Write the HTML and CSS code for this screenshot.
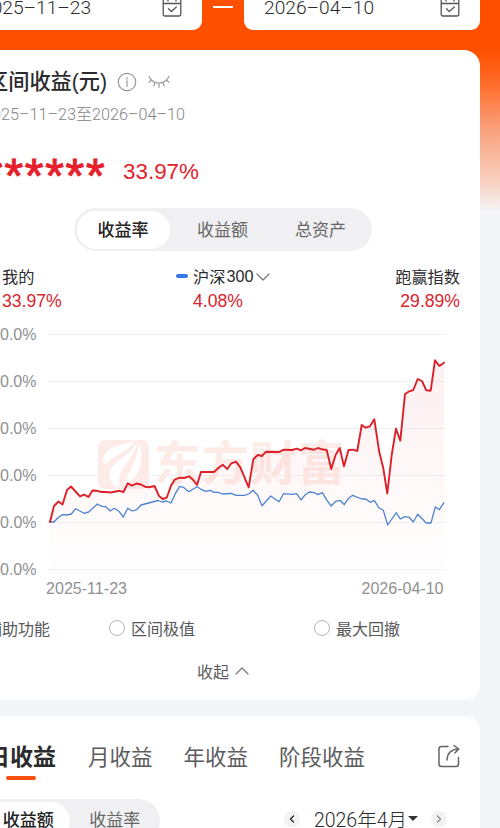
FILE: index.html
```html
<!DOCTYPE html>
<html lang="zh-CN">
<head>
<meta charset="utf-8">
<title>区间收益</title>
<link rel="stylesheet" href="styles.css">
</head>
<body>
<div class="screen">
  <header class="range">
    <div class="range-box range-start"><span>2025–11–23</span>
      <svg class="calendar" viewBox="0 0 20 22"><path d="M1.2 4.2h17.6v15.4q0 1.4-1.4 1.4H2.600q-1.400 0-1.400-1.400zM1.200 8.500h17.600M6 1v5M14 1v5M6.500 13.800l2.800 2.800 5-4.600"/></svg>
    </div>
    <i class="range-dash"></i>
    <div class="range-box range-end"><span>2026–04–10</span>
      <svg class="calendar" viewBox="0 0 20 22"><path d="M1.2 4.2h17.6v15.4q0 1.4-1.4 1.4H2.600q-1.400 0-1.400-1.400zM1.200 8.500h17.600M6 1v5M14 1v5M6.500 13.800l2.800 2.800 5-4.600"/></svg>
    </div>
  </header>

  <section class="card summary">
    <div class="title-row">
      <h1>区间收益(元)</h1>
      <svg class="info" viewBox="0 0 20 20"><circle cx="10" cy="10" r="8.700"/><path d="M10 8.800v5.600M10 5.600v1.500"/></svg>
      <svg class="eye" viewBox="0 0 24 14"><path d="M2 1.500q3.500 6.500 10 6.500t10-6.500M4.600 5L2 7.400M8.200 7.300L6.800 11M12 8v4.200M15.800 7.300l1.400 3.700M19.400 5L22 7.400"/></svg>
    </div>
    <p class="period">2025–11–23至2026–04–10</p>
    <div class="amount-row"><span class="stars">******</span><span class="rate">33.97%</span></div>
    <nav class="segment">
      <span class="segment-item active">收益率</span><span class="segment-item">收益额</span><span class="segment-item">总资产</span>
    </nav>
    <div class="legend">
      <div><div class="legend-name">我的</div><div class="legend-value">33.97%</div></div>
      <div class="legend-index"><div class="legend-name"><i class="blue-mark"></i>沪深<span class="index-number">300</span><svg class="chevron" viewBox="0 0 14 8"><path d="M1 1l6 6 6-6"/></svg></div><div class="legend-value">4.08%</div></div>
      <div class="legend-win"><div class="legend-name">跑赢指数</div><div class="legend-value">29.89%</div></div>
    </div>
    <svg class="chart" viewBox="0 320 480 280">
      <defs><linearGradient id="area" x1="0" y1="360" x2="0" y2="568" gradientUnits="userSpaceOnUse"><stop offset="0" stop-color="#e8303a" stop-opacity=".075"/><stop offset="1" stop-color="#e8303a" stop-opacity=".005"/></linearGradient></defs>
      <path class="grid" d="M48 334.500H445M48 381.500H445M48 428.500H445M48 475.500H445M48 522.500H445M48 569.500H445"/>
      <g class="watermark">
        <rect x="98" y="440" width="51" height="49" rx="7"/>
        <path class="watermark-cut" d="M135 441C126 444 106 446 103 458C102 462 104 465 106 464C112 456 128 452 135 441ZM137 442C133 455 109 462 109 475C111 485 117 489 121 486C112 473 135 459 137 442ZM139 443C144 461 141 476 123 487C127 475 137 461 139 443Z"/>
        <text x="154" y="480" textLength="191">东方财富</text>
      </g>
      <path class="area" d="M50 522L54 506 58.500 501.500 62.500 504.500 67 490 71 486.500 80 496 84 494.700 88.500 497 92.500 490.500 110 492.500 119.500 490.800 123.500 492 127.500 483.500 132 485.700 136.500 483.500 145 486.700 154.500 486 159 496 162.700 499 166.700 497.700 171 485.700 175 479.300 189 476.300 197 485 201 472 214 472 222.700 464.700 227.300 469 236 461.700 240.300 467.300 248.700 487.300 253.300 459.300 257.700 455 262 456 266 451.700 279.300 452 283.700 449.700 326.700 450 331.200 469 335.700 454.700 339.700 448 344 466.300 348.500 450 357.300 451 361.700 425 370 426.300 374.300 419.300 379.300 452.300 383.300 468.300 387.300 493.500 391.700 455 396 428.700 400.300 440.700 405 394 413.300 390 417.700 379 422 381 426.300 390.300 430.700 390.700 435 360.300 439.300 366 444 362.700V569H50Z"/>
      <polyline class="line-index" points="49.500,522 54,522 58,517.700 62.300,514.700 66.700,515 71.300,514 75.700,508.700 84,513.300 88.700,512 97.300,504 101.700,506.300 105.700,506.700 110.300,511 114.300,508.300 119,511.300 123.300,517 127.700,508.300 132.300,511 136.700,509.700 141,505 158,500.500 162.300,502 166.300,501 171,503 175.300,493.700 179.700,486.300 184,487.700 188.700,491.700 197,486.700 201,489.300 205.700,491.300 210,490.300 214.300,492.300 218.300,492.300 222.700,494 231.300,493.300 236,495.300 244.300,495.300 248.700,494 253,490.300 257.700,495.300 262,505.700 270.700,496 279,501.700 283.500,493.700 292,494.300 296.700,493.700 301,500 305.300,494.700 309.300,492 314,492.700 318,494.700 322.300,492.700 327,500.300 331.300,506 335.700,501.300 340,500.300 344.300,504.700 348.500,498.300 352.700,495.300 361.700,499 365.700,499 370.300,502.300 374.300,500.300 379,508 383.300,510.300 387.700,525 396.300,512.700 400.300,519 404.700,516.700 409,517.300 413.300,522 417.700,514.300 426.300,523 431,523 435.300,507 439.300,509.700 444,502.700"/>
      <polyline class="line-mine" points="50,522 54,506 58.500,501.500 62.500,504.500 67,490 71,486.500 75.500,491.500 80,496.300 84,494.700 88.500,497 92.500,490.500 97,490.800 101.500,492 106,492 110.500,492.500 119.500,490.800 123.500,492 127.700,483.300 132,485.700 136.500,483.500 141,484.500 145,486.700 149,487.200 154.500,486 159,496 162.700,499 166.700,497.700 171,485.700 175,479.300 180,477.700 184,478 189,476.300 193,479.700 197,485 201,472 214,472 218.300,468 222.700,464.700 227.300,469 231.300,463.300 236,461.700 240.300,467.300 248.700,487.300 253.300,459.300 257.700,455 262,456 266,451.700 279.300,452 283.700,449.700 292,450 296.700,448.700 301,450.300 305,448 314,449.700 318,448 322,449.300 326.700,450 331.200,469 335.700,454.700 339.700,448 344,466.300 348.500,450 353.300,449.700 357.300,451 361.700,425 365.700,427.700 370,426.300 374.300,419.300 379.300,452.300 383.300,468.300 387.300,493.500 391.700,455 396,428.700 400.300,440.700 405,394 409.300,391.300 413.300,390 417.700,379 422,381 426.300,390.300 430.700,390.700 435,360.300 439.300,366 444,362.700"/>
      <g class="axis axis-y"><text x="36.500" y="340">40.0%</text><text x="36.500" y="387">30.0%</text><text x="36.500" y="434">20.0%</text><text x="36.500" y="481">10.0%</text><text x="36.500" y="528">0.0%</text><text x="36.500" y="575">-10.0%</text></g>
      <g class="axis"><text x="46" y="593.500" textLength="81">2025-11-23</text><text x="361.500" y="593.500" textLength="82">2026-04-10</text></g>
    </svg>
    <div class="options"><span class="helper">辅助功能</span><span class="option"><i class="radio"></i>区间极值</span><span class="option option-last"><i class="radio"></i>最大回撤</span></div>
    <div class="collapse">收起<svg class="chevron" viewBox="0 0 14 8"><path d="M1 7l6-6 6 6"/></svg></div>
  </section>

  <section class="card calendar-card">
    <div class="tabs">
      <span class="tab current">日收益</span><span class="tab">月收益</span><span class="tab">年收益</span><span class="tab">阶段收益</span>
      <svg class="share" viewBox="0 0 24 24"><path d="M11 2.500H4.500Q2 2.500 2 5v15q0 2.500 2.500 2.500H19q2.500 0 2.500-2.500v-6.500M10 16Q10.500 5.500 21.500 5M17 1.500L21.800 5l-4 4"/></svg>
    </div>
    <div class="month-row">
      <nav class="segment segment-month"><span class="segment-item active">收益额</span><span class="segment-item">收益率</span></nav>
      <div class="month">
        <span class="arrow"><svg viewBox="0 0 6 8"><path d="M4.500 1L1.500 4l3 3"/></svg></span>
        <span class="month-name">2026年4月</span><i class="caret"></i>
        <span class="arrow arrow-next"><svg viewBox="0 0 6 8"><path d="M1.500 1l3 3-3 3"/></svg></span>
      </div>
    </div>
  </section>
</div>
</body>
</html>
```

FILE: styles.css
```css
* { box-sizing: border-box; }
html, body { margin: 0; height: 828px; overflow: hidden; }
body {
  background: linear-gradient(#ff5000 0, #ff5000 50px, #ff6a28 82px, #f9a27e 130px, #f8cdbc 178px, #f4f5f8 212px);
  font-family: "Liberation Sans", "Noto Sans CJK SC", sans-serif;
  color: #2b2b2d;
}
svg { display: block; flex: none; fill: none; stroke-linecap: round; stroke-linejoin: round; }
h1, p { margin: 0; font-weight: inherit; }
i { display: block; flex: none; }
.screen { width: 500px; height: 828px; overflow: hidden; }

.range { display: flex; height: 30px; margin-bottom: 20px; align-items: center; }
.range-box {
  display: flex; align-items: center; justify-content: space-between;
  height: 30px; padding-bottom: 16px; background: #fff;
  font: 300 19.200px Roboto, sans-serif; white-space: nowrap;
}
.range-start { width: 202px; padding-right: 20px; border-radius: 0 0 9px; }
.range-start span { margin-left: -19px; }
.range-end { width: 236px; padding: 0 20px 16px; border-radius: 0 0 9px 9px; }
.range-dash { width: 20px; height: 1.500px; margin: -16px 11px 0; background: #fff; }
.calendar { width: 20px; height: 22px; margin-top: -2px; stroke: #555; stroke-width: 1.300; }

.card { width: 480px; background: #fff; }
.summary { height: 650px; padding-top: 14px; border-radius: 0 16px 16px 0; }
.title-row { display: flex; align-items: center; height: 36px; margin-left: -13px; }
.title-row h1 { margin-top: -1px; font-size: 21.200px; font-weight: 500; line-height: 30px; white-space: nowrap; }
.info { width: 20px; height: 20px; margin-left: 10px; stroke: #999; stroke-width: 1.200; }
.eye { width: 24px; height: 14px; margin-left: 10px; stroke: #999; stroke-width: 1.200; }
.period {
  height: 28px; margin-left: -17px; line-height: 29px; white-space: nowrap;
  font-family: Roboto, "Noto Sans CJK SC", sans-serif; font-weight: 300; font-size: 16.200px; color: #858587;
}
.amount-row { display: flex; align-items: center; height: 72px; margin-top: 8px; color: #e5202c; }
.stars { width: 107px; height: 72px; margin-left: -16px; font-size: 48px; letter-spacing: 1.700px; line-height: 80px; -webkit-text-stroke: 1px #e5202c; }
.rate { margin-left: 32px; font-size: 22.400px; }

.segment { display: flex; align-items: center; background: #f0f0f2; border-radius: 22px; font-size: 17px; color: #666; }
.segment-item { display: flex; align-items: center; justify-content: center; height: 38px; padding-bottom: 2px; border-radius: 19px; }
.segment-item.active { background: #fff; color: #222; font-weight: 500; }
.summary .segment { width: 298px; height: 43px; margin-left: 74px; padding: 2.500px; }
.summary .segment-item { width: 99px; }
.summary .segment-item.active { width: 94px; margin-right: 4px; }

.legend { display: grid; grid-template-columns: 174px 170px 1fr; height: 69px; padding: 12px 20px 0 2px; }
.legend-name { display: flex; align-items: center; height: 25px; font-size: 16.200px; white-space: nowrap; }
.index-number { padding: 1px 0 0 1px; }
.legend-value { height: 24px; font-size: 17.600px; line-height: 26px; color: #d9232e; }
.legend-index .legend-value { padding-left: 17px; }
.legend-win { justify-self: end; text-align: right; }
.blue-mark { width: 12px; height: 4px; margin-right: 5px; border-radius: 2px; background: #3478e5; }
.chevron { width: 14px; height: 8px; stroke: #777; stroke-width: 1.200; }
.legend .chevron { margin: 3px 0 0 3px; }

.chart { width: 480px; height: 280px; }
.grid { stroke: #f1f1f2; stroke-width: 1; }
.area { fill: url(#area); }
.line-index { stroke: #4d83d2; stroke-width: 1.300; }
.line-mine { stroke: #dc2029; stroke-width: 1.900; }
.watermark { fill: #fdebe7; font: 700 47px "Noto Sans CJK SC", sans-serif; }
.watermark-cut { fill: #fff; }
.axis { fill: #909092; font-size: 16px; }
.axis-y { text-anchor: end; }

.options { display: flex; align-items: center; height: 56px; font-size: 16px; color: #58585a; white-space: nowrap; }
.helper { width: 123px; margin-left: -14px; }
.option { display: flex; align-items: center; width: 205px; }
.option-last { width: auto; }
.radio { width: 16px; height: 16px; margin-right: 6px; border: 1px solid #b5b5b7; border-radius: 50%; }
.collapse { display: flex; align-items: center; height: 30px; padding-left: 197px; font-size: 16px; color: #58585a; }
.collapse .chevron { margin-left: 6px; }

.calendar-card { height: 112px; margin-top: 16px; border-radius: 0 16px 0 0; }
.tabs { display: flex; align-items: center; height: 78px; padding-right: 19px; font-size: 21.500px; color: #5c5c5e; white-space: nowrap; }
.tab { margin-right: 31px; }
.current {
  position: relative; margin-left: -13px; margin-right: 32px;
  font-size: 23px; font-weight: 700; color: #2b2b2d;
}
.current::after {
  content: ""; position: absolute; left: 19px; bottom: -8px;
  width: 30px; height: 4.500px; border-radius: 3px; background: #f6500f;
}
.share { width: 24px; height: 24px; margin: 2px 0 0 auto; stroke: #666; stroke-width: 1.500; }
.month-row { display: flex; align-items: center; justify-content: space-between; height: 43px; margin-top: 5px; }
.segment-month { width: 160px; height: 43px; border-radius: 0 22px 22px 0; }
.segment-month .segment-item { width: 91px; padding-bottom: 5px; }
.segment-month .segment-item.active { width: 70px; padding-right: 13px; border-radius: 0 19px 19px 0; }
.month { display: flex; align-items: center; margin: -4px 33px 0 0; }
.month-name { margin-left: 14px; font: 300 19.500px Roboto, "Noto Sans CJK SC", sans-serif; white-space: nowrap; }
.arrow { display: flex; align-items: center; justify-content: center; width: 16px; height: 16px; border-radius: 50%; background: #f2f2f3; }
.arrow svg { width: 6px; height: 8px; stroke: #222; stroke-width: 1.300; }
.arrow-next svg { stroke: #888; }
.caret { margin: 0 13px 0 1px; border: 5px solid transparent; border-top-color: #333; border-bottom: 0; }
```
